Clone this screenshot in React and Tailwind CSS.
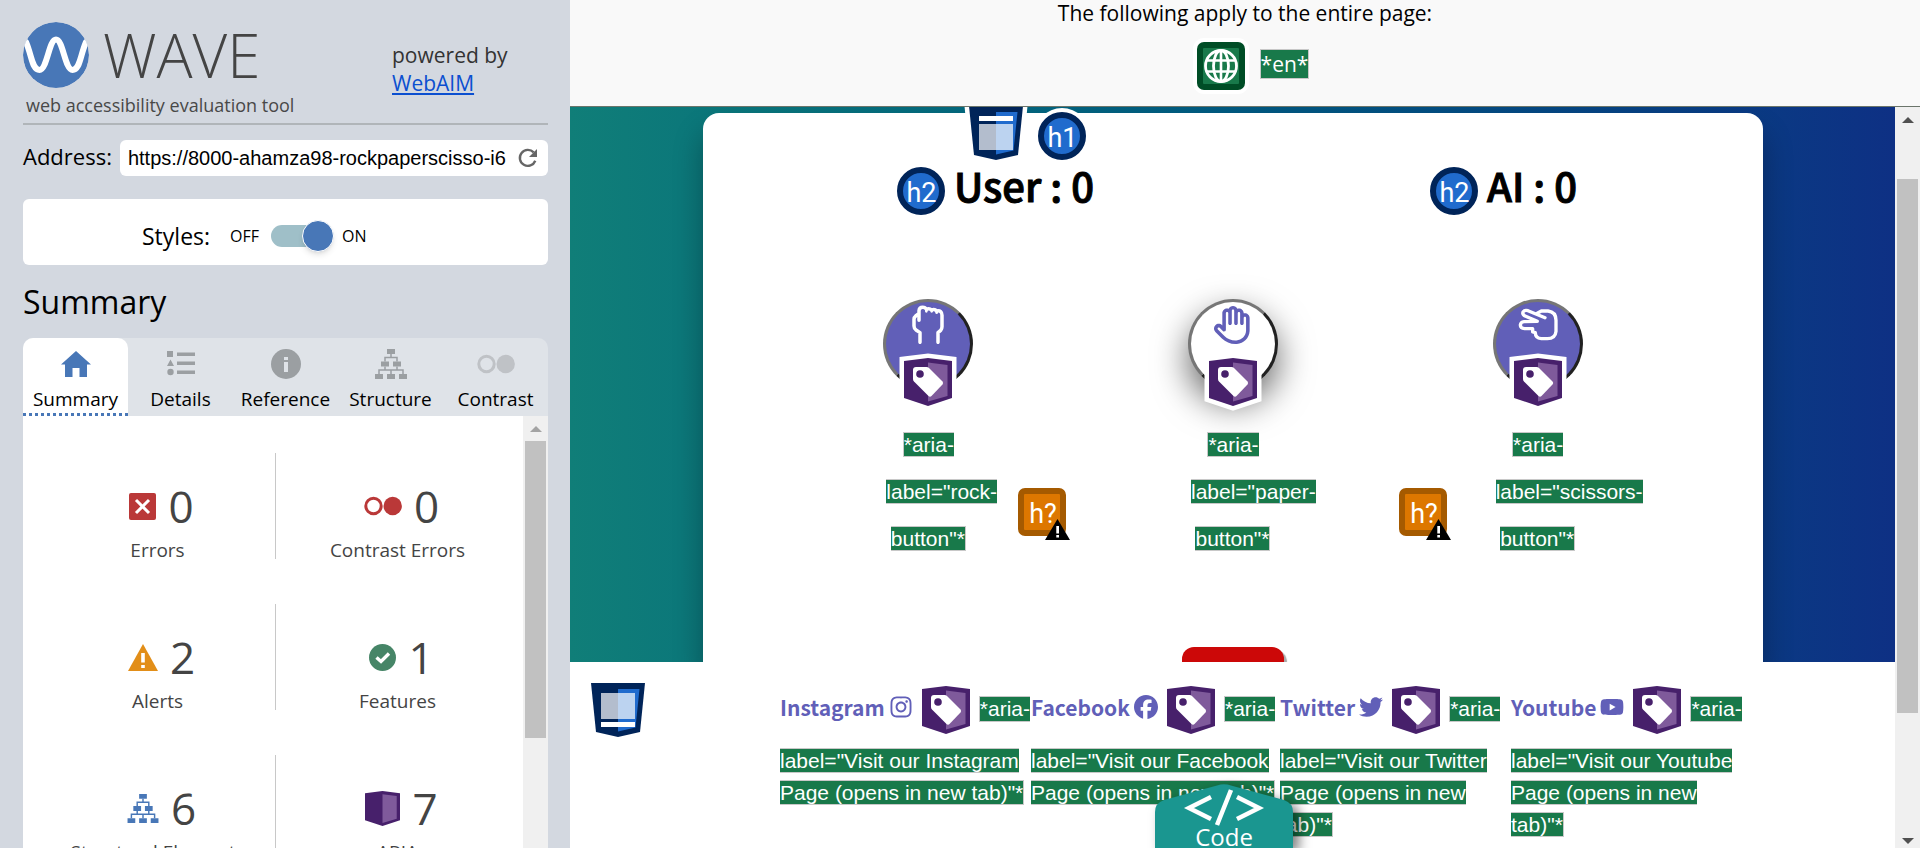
import React from "react";
import { FaRegHand, FaInstagram, FaFacebook, FaTwitter, FaYoutube } from "react-icons/fa6";

function WaveLogo() {
  return (
    <svg viewBox="0 0 66 66" className="size-[66px]" aria-hidden="true">
      <clipPath id="disc">
        <circle cx="33" cy="33" r="33" />
      </clipPath>
      <g clipPath="url(#disc)">
        <circle cx="33" cy="33" r="33" fill="#4877b7" />
        <path
          d="M3 20C9 34 9 48 16.500 48S26 17.500 33 17.500S42 48 49.500 48S57 34 63 20"
          fill="none"
          stroke="#fff"
          strokeWidth="6"
          strokeLinecap="round"
        />
      </g>
    </svg>
  );
}

function HomeIcon() {
  return (
    <svg viewBox="0 0 30 26" className="h-[26px] w-[30px]" aria-hidden="true">
      <path d="M15 0L30 13.500H26V26H18.500V17H11.500V26H4V13.500H0Z" fill="#4877b7" />
    </svg>
  );
}

function ListIcon() {
  return (
    <svg viewBox="0 0 28 26" className="h-[26px] w-[28px]" fill="#9b9fa2" aria-hidden="true">
      <path d="M0 0H6V6H0ZM10 1.500H28V5H10ZM10 10.500H28V14H10ZM10 19.500H28V23H10ZM3.500 8.500L7 15H0Z" />
      <circle cx="3.500" cy="21" r="3.200" />
    </svg>
  );
}

function InfoIcon() {
  return (
    <svg viewBox="0 0 30 30" className="size-[30px]" aria-hidden="true">
      <circle cx="15" cy="15" r="15" fill="#9b9fa2" />
      <path d="M13 8H17V11H13ZM13 13H17V23H13Z" fill="#dfe3e8" />
    </svg>
  );
}

function TreeIcon({ className }) {
  return (
    <svg viewBox="0 0 32 30" className={className} fill="currentColor" aria-hidden="true">
      <path d="M12 0H20V5H12ZM6 12.500H14V17.500H6ZM18 12.500H26V17.500H18ZM0 25H8V30H0ZM12 25H20V30H12ZM24 25H32V30H24Z" />
      <path
        d="M16 5V8.500M10 12.500V8.500H22V12.500M10 17.500V21M22 17.500V21M4 25V21H28V25M16 21V25"
        fill="none"
        stroke="currentColor"
        strokeWidth="1.500"
      />
    </svg>
  );
}

function TwoRings({ className }) {
  return (
    <svg viewBox="0 0 38 20" className={className} aria-hidden="true">
      <circle cx="9.500" cy="10" r="7.700" fill="none" stroke="currentColor" strokeWidth="3" />
      <circle cx="28.700" cy="10" r="9.200" fill="currentColor" />
    </svg>
  );
}

function ErrorIcon() {
  return (
    <svg viewBox="0 0 27 27" className="size-[27px]" aria-hidden="true">
      <rect width="27" height="27" rx="2" fill="#ba3838" />
      <path d="M7 7L20 20M20 7L7 20" stroke="#fff" strokeWidth="3" />
    </svg>
  );
}

function AlertIcon() {
  return (
    <svg viewBox="0 0 30 27" className="h-[27px] w-[30px]" aria-hidden="true">
      <path d="M15 0L30 27H0Z" fill="#e28e18" />
      <path d="M13.200 9H16.800V18.500H13.200ZM13.200 21H16.800V24H13.200Z" fill="#fff" />
    </svg>
  );
}

function FeatureIcon() {
  return (
    <svg viewBox="0 0 27 27" className="size-[27px]" aria-hidden="true">
      <circle cx="13.500" cy="13.500" r="13.500" fill="#468567" />
      <path d="M7.500 13.500L12 17.500L20 9.500" fill="none" stroke="#fff" strokeWidth="3.400" />
    </svg>
  );
}

function AriaIcon() {
  return (
    <svg viewBox="0 0 48 48" className="size-[35px]" aria-hidden="true">
      <path d="M0 3L24 0L48 3V40L24 48L0 40Z" fill="#47206b" />
      <path d="M24 4.500L43.500 7V38L24 44Z" fill="#7f5a9b" />
    </svg>
  );
}

function TagIcon() {
  return (
    <svg viewBox="0 0 48 48" className="inline size-12 shrink-0 overflow-visible" aria-hidden="true">
      <path d="M0 3L24 0L48 3V40L24 48L0 40Z" fill="#fff" stroke="#fff" strokeWidth="9" />
      <path d="M0 3L24 0L48 3V40L24 48L0 40Z" fill="#47206b" />
      <path d="M24 4.500L43.500 7V38L24 43.500Z" fill="#7f5a9b" />
      <path
        d="M12 9H22.500Q24 9 25 10L38.500 23.500Q39.800 25 38.500 26.500L27.500 38Q26 39.500 24.500 38L10 23.500Q9 22.500 9 21V12Q9 9 12 9Z"
        fill="#fff"
      />
      <circle cx="16" cy="16" r="3.800" fill="#47206b" />
    </svg>
  );
}

function RockHand() {
  return (
    <svg
      viewBox="160 75 96 117"
      className="h-[39px] w-8"
      fill="none"
      stroke="currentColor"
      strokeWidth="10.500"
      strokeLinecap="round"
      strokeLinejoin="round"
      aria-hidden="true"
    >
      <path d="M184 187V158L172 150Q166 145 166 138V118Q166 112 172 107L180 101M181 121V92Q182 82 192 82Q200 82 203 88Q212 84 219 90Q228 86 234 93Q250 90 250 106V140Q250 146 246 151L238 158V187" />
      <path d="M203 88V94M219 90V94M234 93V98" strokeWidth="8" />
    </svg>
  );
}

function ScissorsHand() {
  return (
    <svg
      viewBox="1072 88 120 99"
      className="h-[33px] w-10"
      fill="none"
      stroke="currentColor"
      strokeWidth="10"
      strokeLinecap="round"
      strokeLinejoin="round"
      aria-hidden="true"
    >
      <path d="M1127 105L1142 97H1162Q1186 100 1186 125V158Q1184 180 1160 180H1142Q1124 178 1124 162L1116 160V150H1092Q1079 149 1079 139Q1080 130 1090 129L1130 128L1095 113Q1084 108 1087 100Q1092 93 1102 96L1153 117" />
    </svg>
  );
}

function RegionIcon({ footer }) {
  return (
    <svg viewBox="0 0 54 54" className="size-[54px] shrink-0 overflow-visible" aria-hidden="true">
      <path d="M0 0H54L49 49L27 54L5 49Z" fill="#fff" stroke="#fff" strokeWidth="9" />
      <path d="M0 0H54L49 49L27 54L5 49Z" fill="#002459" />
      <path d="M27 6H48.500L44.500 44.500L27 48.500Z" fill="#206bcd" />
      <rect x="10" y={footer ? 10 : 18} width="34" height="26" fill="#fff" opacity="0.700" />
      <rect x="10" y={footer ? 39 : 10} width="34" height="5" fill="#fff" />
    </svg>
  );
}

function HeadingBadge({ level }) {
  return (
    <svg
      viewBox="0 0 48 48"
      className="size-12 shrink-0 overflow-visible"
      role="img"
      aria-label={`Heading level ${level}`}
    >
      <circle cx="24" cy="24" r="28" fill="#fff" />
      <circle cx="24" cy="24" r="21" fill="#206bcd" stroke="#002459" strokeWidth="6" />
      <text
        x="24.500"
        y="34.500"
        fontSize="27"
        textAnchor="middle"
        fill="#fff"
        className="font-['Roboto',sans-serif] font-normal"
      >
        h{level}
      </text>
    </svg>
  );
}

function PossibleHeading({ className }) {
  return (
    <svg viewBox="0 0 52 52" className={className} role="img" aria-label="Possible heading">
      <rect x="3" y="3" width="42" height="42" rx="4" fill="#dd7700" stroke="#a55a00" strokeWidth="6" />
      <text
        x="25"
        y="34.500"
        fontSize="27"
        textAnchor="middle"
        fill="#fff"
        className="font-['Roboto',sans-serif] font-normal"
      >
        h?
      </text>
      <path d="M39.500 31L52 52H27Z" fill="#000" />
      <path d="M38.300 38H41V45.500H38.300ZM38.300 47H41V49.500H38.300Z" fill="#fff" />
    </svg>
  );
}

function GlobeBadge() {
  return (
    <svg viewBox="0 0 48 48" className="size-12 overflow-visible" aria-hidden="true">
      <rect x="-4" y="-4" width="56" height="56" rx="11" fill="#fff" />
      <rect width="48" height="48" rx="7" fill="#004d26" />
      <rect x="6" y="6" width="36" height="36" rx="1" fill="#18794a" />
      <g fill="none" stroke="#fff" strokeWidth="2.800">
        <circle cx="24" cy="24" r="15.500" />
        <ellipse cx="24" cy="24" rx="7.500" ry="15.500" />
        <path d="M24 8.500V39.500M9.500 18.500H38.500M9.500 29.500H38.500" strokeWidth="2.600" />
      </g>
    </svg>
  );
}

function ReloadIcon() {
  return (
    <svg viewBox="0 0 20 20" className="size-5" aria-hidden="true">
      <path d="M17.300 12.800A8 8 0 1 1 15.700 4.400" fill="none" stroke="#666" strokeWidth="2.400" />
      <path d="M19 1V9H11Z" fill="#666" />
    </svg>
  );
}

function Note({ children, className = "" }) {
  return (
    <span className={`border border-[#c8c8c8] bg-[#18794a] text-white ${className}`}>{children}</span>
  );
}

const tabs = [
  { name: "Summary", icon: <HomeIcon />, active: true },
  { name: "Details", icon: <ListIcon /> },
  { name: "Reference", icon: <InfoIcon /> },
  { name: "Structure", icon: <TreeIcon className="h-[30px] w-8 text-[#9b9fa2]" /> },
  { name: "Contrast", icon: <TwoRings className="h-5 w-[38px] text-[#bfc2c6]" /> },
];

const counts = [
  [
    { icon: <ErrorIcon />, value: 0, label: "Errors" },
    { icon: <TwoRings className="h-5 w-[38px] text-[#ba3838]" />, value: 0, label: "Contrast Errors" },
  ],
  [
    { icon: <AlertIcon />, value: 2, label: "Alerts" },
    { icon: <FeatureIcon />, value: 1, label: "Features" },
  ],
  [
    { icon: <TreeIcon className="h-[29px] w-8 text-[#4877b7]" />, value: 6, label: "Structural Elements" },
    { icon: <AriaIcon />, value: 7, label: "ARIA" },
  ],
];

function Sidebar() {
  return (
    <aside className="flex w-[570px] shrink-0 flex-col bg-[#d3d8e0] pr-[22px] pl-[23px] font-['Open_Sans',sans-serif] text-black">
      <header className="flex h-[125px] shrink-0 justify-between border-b-2 border-[#b0b5b9] pt-[22px]">
        <div>
          <div className="flex h-[66px] items-center gap-[14px]">
            <WaveLogo />
            <span className="text-[60px] leading-[66px] font-light text-[#444]">WAVE</span>
          </div>
          <p className="pl-[3px] text-[18px] leading-[34px] text-[#484848]">web accessibility evaluation tool</p>
        </div>
        <p className="w-[156px] pt-[19px] text-[21px] leading-7 text-[#333]">
          powered by
          <br />
          <a href="#webaim" className="text-[#0b4fd0] underline">
            WebAIM
          </a>
        </p>
      </header>

      <form className="mt-[15px] flex h-9 shrink-0 gap-2">
        <label htmlFor="address" className="text-[22px] leading-8">
          Address:
        </label>
        <div className="flex h-9 min-w-0 flex-1 items-center rounded-md bg-white pr-[10px]">
          <input
            id="address"
            type="text"
            defaultValue="https://8000-ahamza98-rockpaperscisso-i6"
            className="h-9 min-w-0 flex-1 bg-transparent pl-2 font-['Liberation_Sans',sans-serif] text-[20px] outline-none"
          />
          <button type="button" aria-label="Reload" className="shrink-0">
            <ReloadIcon />
          </button>
        </div>
      </form>

      <section className="mt-[23px] flex h-[66px] shrink-0 items-center rounded-md bg-white pt-2 pl-[119px]">
        <span id="styles" className="w-[88px] text-[23px] leading-8">
          Styles:
        </span>
        <span className="w-[41px] text-[16px]">OFF</span>
        <button
          type="button"
          role="switch"
          aria-checked="true"
          aria-labelledby="styles"
          className="flex h-[22px] w-[59px] items-center justify-end rounded-full bg-[#9fbfc8]"
        >
          <span className="-mr-1 size-8 shrink-0 rounded-full border border-white bg-[#4877b7] shadow-md" />
        </button>
        <span className="pl-3 text-[16px]">ON</span>
      </section>

      <h2 className="mt-3 shrink-0 text-[32px] leading-[50px]">Summary</h2>

      <nav className="mt-[11px] grid h-[78px] shrink-0 grid-cols-5 rounded-t-[10px] bg-[#dfe3e8]">
        {tabs.map((tab) => (
          <button
            key={tab.name}
            type="button"
            className={
              tab.active
                ? "flex flex-col items-center rounded-t-[10px] border-b-3 border-dotted border-[#4877b7] bg-white pt-[11px]"
                : "flex flex-col items-center pt-[11px]"
            }
          >
            <span className="flex h-[30px] items-center">{tab.icon}</span>
            <span className="pt-[6px] text-[19px] leading-7">{tab.name}</span>
          </button>
        ))}
      </nav>

      <div className="flex min-h-0 flex-1 bg-white">
        <div className="min-w-0 flex-1 overflow-hidden pt-[37px] pl-[17px]">
          {counts.map((row) => (
            <div
              key={row[0].label}
              className="mb-[45px] grid grid-cols-[236px_1fr] grid-rows-[106px]"
            >
              {row.map((item, i) => (
                <div
                  key={item.label}
                  className={
                    i === 0
                      ? "flex flex-col items-center border-r border-[#c8c8c8] pt-[23px]"
                      : "flex flex-col items-center pt-[23px] pr-1"
                  }
                >
                  <div className="flex h-[60px] items-center gap-3 pl-2 text-[44px] leading-[60px] text-[#444]">
                    {item.icon}
                    <span>{item.value}</span>
                  </div>
                  <span className="text-[19px] leading-7 text-[#444]">{item.label}</span>
                </div>
              ))}
            </div>
          ))}
        </div>
        <div className="flex w-[25px] shrink-0 flex-col items-center bg-[#f0f0f0]">
          <svg viewBox="0 0 12 25" className="h-[25px] w-3" aria-hidden="true">
            <path d="M6 10L12 16H0Z" fill="#a3a3a3" />
          </svg>
          <div className="h-[297px] w-[21px] bg-[#c1c1c1]" />
        </div>
      </div>
    </aside>
  );
}

const choices = [
  { name: "rock", icon: <RockHand /> },
  { name: "paper", icon: <FaRegHand />, active: true },
  { name: "scissors", icon: <ScissorsHand /> },
];

function Game() {
  return (
    <main className="min-h-0 flex-1 overflow-hidden bg-linear-to-r from-[#107e78] to-[#0e3084] pt-[6px] pr-[132px] pl-[133px]">
      <div className="h-full rounded-t-2xl bg-white shadow-[0_20px_30px_rgba(0,0,0,0.3)]">
        <div className="flex h-[47px] items-end gap-[15px] pl-[266px]">
          <RegionIcon />
          <HeadingBadge level={1} />
        </div>
        <div className="mt-[7px] flex h-12 justify-between pr-[186px] pl-[194px] font-['Noto_Sans_CJK_SC',sans-serif] text-[40px] leading-9 font-medium text-black [-webkit-text-stroke:1px_black]">
          <h2 className="flex gap-[9px]">
            <span className="[-webkit-text-stroke:0]">
              <HeadingBadge level={2} />
            </span>
            <span>User : 0</span>
          </h2>
          <h2 className="flex gap-[9px]">
            <span className="[-webkit-text-stroke:0]">
              <HeadingBadge level={2} />
            </span>
            <span>AI : 0</span>
          </h2>
        </div>

        <div className="relative mx-[73px] mt-[84px] grid grid-cols-3">
          {choices.map(({ name, icon, active }) => (
            <div key={name} className="flex flex-col items-center">
              <button
                type="button"
                aria-label={`${name}-button`}
                className={
                  active
                    ? "flex size-[90px] flex-col items-center rounded-full border-3 border-t-[#767676] border-r-[#212121] border-b-[#212121] border-l-[#767676] bg-white pt-[3px] text-[38px] text-[#615fb8] shadow-[0_15px_35px_rgba(0,0,0,0.6)]"
                    : "flex size-[90px] flex-col items-center rounded-full border-3 border-t-[#767676] border-r-[#212121] border-b-[#212121] border-l-[#767676] bg-[#615fb8] pt-[3px] text-[38px] text-white"
                }
              >
                <span className="flex h-[39px] shrink-0 items-center">{icon}</span>
                <span className="mt-[14px] flex shrink-0">
                  <TagIcon />
                </span>
              </button>
              <p className="z-10 mt-8 w-[84px] text-center font-['Liberation_Sans',sans-serif] text-[21px] leading-[47px] whitespace-nowrap">
                <Note>
                  *aria-
                  <br />
                  label="{name}-
                  <br />
                  button"*
                </Note>
              </p>
            </div>
          ))}
          <PossibleHeading className="absolute top-[189px] left-1/2 -ml-[191px] size-[52px] -translate-x-6" />
          <PossibleHeading className="absolute top-[189px] left-1/2 ml-[190px] size-[52px] -translate-x-6" />
        </div>

        <div className="mt-[85px] flex justify-center">
          <button
            type="button"
            aria-label="Reset"
            className="h-12 w-[102px] rounded-xl bg-[#cc0808] shadow-[3px_3px_1px_#aaa]"
          />
        </div>
      </div>
    </main>
  );
}

const links = [
  { name: "Instagram", Icon: FaInstagram, width: "w-[251px]", lines: ['label="Visit our Instagram', 'Page (opens in new tab)"*'] },
  { name: "Facebook", Icon: FaFacebook, width: "w-[249px]", lines: ['label="Visit our Facebook', 'Page (opens in new tab)"*'] },
  { name: "Twitter", Icon: FaTwitter, width: "w-[231px]", lines: ['label="Visit our Twitter', "Page (opens in new", 'tab)"*'] },
  { name: "Youtube", Icon: FaYoutube, width: "w-[236px]", lines: ['label="Visit our Youtube', "Page (opens in new", 'tab)"*'] },
];

function Footer() {
  return (
    <footer className="flex h-[186px] shrink-0 bg-white pt-[21px] pl-[21px]">
      <RegionIcon footer />
      <ul className="flex pt-[3px] pl-[135px]">
        {links.map(({ name, Icon, width, lines }) => (
          <li key={name} className={`shrink-0 ${width}`}>
            <a href={`#${name.toLowerCase()}`} className="block whitespace-nowrap">
              <span className="flex h-12 items-center">
                <span className="flex shrink-0 items-center gap-1 pr-[9px] pb-[6px] text-[#615fb8]">
                  <span className="font-['Noto_Sans_CJK_SC',sans-serif] text-[21px] leading-8 font-bold">
                    {name}
                  </span>
                  <Icon className="h-6 w-auto shrink-0" />
                </span>
                <TagIcon />
                <Note className="mb-[3px] ml-[9px] border-r-0 font-['Liberation_Sans',sans-serif] text-[21px] leading-6">
                  *aria-
                </Note>
              </span>
              <span className="block pt-[11px] font-['Liberation_Sans',sans-serif] text-[21px] leading-8">
                <Note className="border-l-0">
                  {lines.map((line, i) => (
                    <React.Fragment key={line}>
                      {i > 0 && <br />}
                      {line}
                    </React.Fragment>
                  ))}
                </Note>
              </span>
            </a>
          </li>
        ))}
      </ul>
    </footer>
  );
}

function CodeTab() {
  return (
    <button
      type="button"
      className="absolute bottom-0 left-[585px] h-16 w-[138px] font-['Open_Sans',sans-serif] text-[24px] text-white"
    >
      <svg
        viewBox="0 0 138 64"
        className="absolute inset-0 h-16 w-[138px] overflow-visible drop-shadow-[6px_4px_6px_rgba(0,0,0,0.5)]"
        aria-hidden="true"
      >
        <path d="M0 64V28Q0 19 9 16L62 1.500Q69 -1 76 1.500L129 16Q138 19 138 28V64Z" fill="#1a9690" />
        <path
          d="M56 13L34 24L56 35M82 13L104 24L82 35M76 6L62 41"
          fill="none"
          stroke="#fff"
          strokeWidth="4.500"
        />
      </svg>
      <span className="relative block pt-[42px] leading-[22px]">Code</span>
    </button>
  );
}

export default function App() {
  return (
    <div className="flex h-screen overflow-hidden">
      <Sidebar />
      <div className="relative flex min-w-0 flex-1 flex-col">
        <div className="flex h-[107px] shrink-0 flex-col items-center border-b border-[#6b756b] bg-[#f9f9f9] font-['Open_Sans',sans-serif] text-[21px] text-black">
          <p className="leading-[26px]">The following apply to the entire page:</p>
          <div className="flex items-center gap-[15px] pt-4 pl-4">
            <GlobeBadge />
            <Note className="mb-1 leading-7">*en*</Note>
          </div>
        </div>
        <div className="flex min-h-0 flex-1">
          <div className="flex min-w-0 flex-1 flex-col">
            <Game />
            <Footer />
          </div>
          <div className="flex w-[25px] shrink-0 flex-col items-center bg-[#f0f0f0]">
            <svg viewBox="0 0 12 25" className="mb-[47px] h-[25px] w-3" aria-hidden="true">
              <path d="M6 10L12 16H0Z" fill="#505050" />
            </svg>
            <div className="h-[534px] w-[21px] bg-[#c1c1c1]" />
            <svg viewBox="0 0 12 25" className="mt-auto h-[25px] w-3" aria-hidden="true">
              <path d="M6 21L12 15H0Z" fill="#505050" />
            </svg>
          </div>
        </div>
        <CodeTab />
      </div>
    </div>
  );
}
